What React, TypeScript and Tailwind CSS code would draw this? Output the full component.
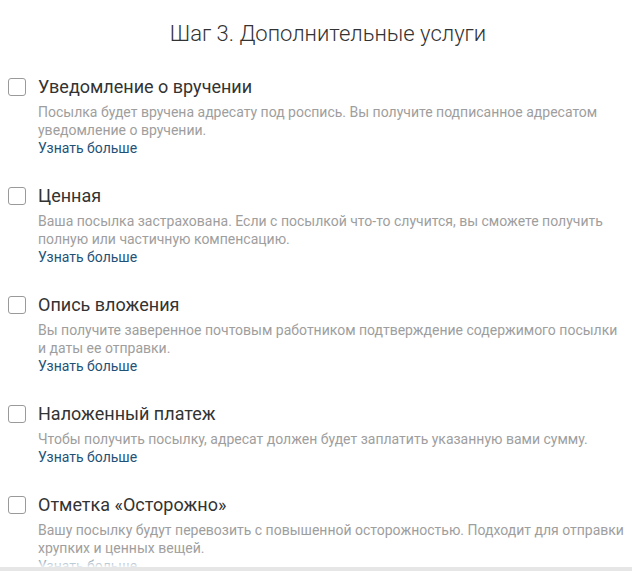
const services = [
  {
    title: 'Уведомление о вручении',
    text: 'Посылка будет вручена адресату под роспись. Вы получите подписанное адресатом уведомление о вручении.',
  },
  {
    title: 'Ценная',
    text: 'Ваша посылка застрахована. Если с посылкой что-то случится, вы сможете получить полную или частичную компенсацию.',
  },
  {
    title: 'Опись вложения',
    text: 'Вы получите заверенное почтовым работником подтверждение содержимого посылки и даты ее отправки.',
  },
  {
    title: 'Наложенный платеж',
    text: 'Чтобы получить посылку, адресат должен будет заплатить указанную вами сумму.',
  },
  {
    title: 'Отметка «Осторожно»',
    text: 'Вашу посылку будут перевозить с повышенной осторожностью. Подходит для отправки хрупких и ценных вещей.',
  },
]

export default function App() {
  return (
    <div className="relative h-[571px] w-[632px] overflow-hidden bg-white font-['Roboto',sans-serif]">
      <h1 className="mt-[18px] pl-6 text-center text-[22px] leading-8 font-light text-[#333]">
        Шаг 3. Дополнительные услуги
      </h1>

      <div className="mt-[25px] flex flex-col gap-[27px] pl-2 pr-1">
        {services.map((s) => (
          <div key={s.title} className="flex gap-3">
            <div className="flex h-6 items-center">
              <span className="block h-[18px] w-[18px] rounded-[3px] border border-[#9a9a9a] bg-white" />
            </div>
            <div className="flex flex-col">
              <div className="text-[18px] leading-6 text-[#333]">{s.title}</div>
              <p className="mt-1 text-[14px] leading-[18px] text-[#9e9e9e]">{s.text}</p>
              <a href="#" className="text-[14px] leading-[18px] text-[#1f5276]">
                Узнать больше
              </a>
            </div>
          </div>
        ))}
      </div>

      {/* bottom fade + edge */}
      <div className="absolute bottom-1 left-0 right-0 h-[16px] bg-gradient-to-b from-white/0 to-white/90" />
      <div className="absolute bottom-0 left-0 right-0 h-1 bg-[#e6e6e6]" />
    </div>
  )
}
